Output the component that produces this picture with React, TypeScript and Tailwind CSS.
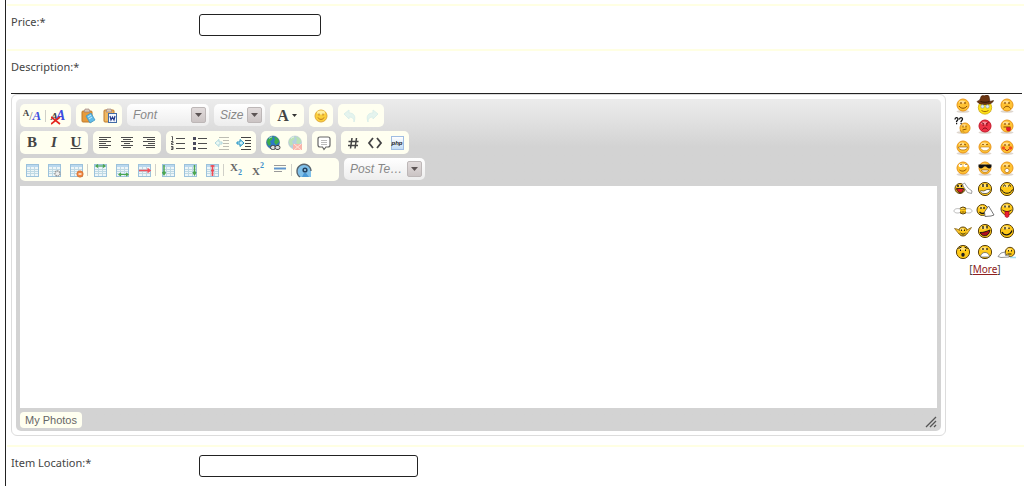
import type { ReactNode } from 'react';
import clsx from 'clsx';

interface IconProps {
  children: ReactNode;
  faded?: boolean;
}

function Icon({ children, faded }: IconProps) {
  return (
    <svg viewBox="0 0 16 16" className={clsx('h-4 w-4', faded && 'opacity-35')} fill="none" aria-hidden="true">
      {children}
    </svg>
  );
}

function Tool({ label, children }: { label: string; children: ReactNode }) {
  return (
    <button type="button" aria-label={label} title={label} className="flex h-full w-[22px] items-center justify-center">
      {children}
    </button>
  );
}

function Group({ children, className }: { children: ReactNode; className?: string }) {
  return (
    <div className={clsx('flex h-[23px] items-center rounded-[5px] bg-[#fffff0] px-px', className)}>{children}</div>
  );
}

function Divider({ className = 'mr-px' }: { className?: string }) {
  return <span className={clsx('h-3 w-px bg-[#d0d0c8]', className)} />;
}

function Combo({ label, className }: { label: string; className: string }) {
  return (
    <div className={clsx('relative h-[22px] rounded-[5px] bg-linear-to-b from-white to-[#ededed]', className)}>
      <select
        aria-label={label}
        className="h-full w-full appearance-none bg-transparent pr-4 pb-px pl-[6px] text-[12px] leading-4 text-[#888] italic outline-none"
      >
        <option>{label}</option>
      </select>
      <span className="pointer-events-none absolute top-[3px] right-[3px] flex h-4 w-[15px] items-center justify-center rounded-[2px] border border-[#bdb7b7] bg-linear-to-b from-[#e2dcdc] to-[#cbc4c4]">
        <svg viewBox="0 0 7 4" className="h-1 w-[7px]" aria-hidden="true">
          <path d="M0 0h7L3.500 4z" fill="#5c5454" />
        </svg>
      </span>
    </div>
  );
}

function Lines({ rows }: { rows: [number, number][] }) {
  return (
    <Icon>
      {rows.map(([x, w], i) => (
        <rect key={i} x={x} y={2 + i * 2} width={w} height="1" fill="#4d4d4d" />
      ))}
    </Icon>
  );
}

function Sheet({ children }: { children?: ReactNode }) {
  return (
    <Icon>
      <rect x="2.500" y="2.500" width="12" height="12" fill="#eef6f8" stroke="#9cc2dc" />
      <rect x="3" y="3" width="11" height="2" fill="#b9d8ee" />
      <path d="M3 7.500h11M3 9.500h11M3 11.500h11M6.500 5v9M10.500 5v9" stroke="#bfd9e4" />
      {children}
    </Icon>
  );
}

function ListIcon({ numbered }: { numbered?: boolean }) {
  return (
    <Icon>
      <path d="M6 3.500h9M6 8.500h9M6 13.500h9" stroke="#4d4d4d" />
      {numbered ? (
        <path d="M1.500 1.500h1v4M1 6.500h2v1.500H1.500V9.500h2M1 11.500h2v1.500H1.500H3V14.500H1" stroke="#555" />
      ) : (
        <path d="M1 2h3v3H1zM1 7h3v3H1zM1 12h3v3H1z" fill="#4b4b5c" />
      )}
    </Icon>
  );
}

function IndentIcon({ out }: { out?: boolean }) {
  return (
    <Icon faded={out}>
      <path d="M5 2.500h10M9 5.500h6M9 8.500h6M9 11.500h6M5 14.500h10" stroke="#444" />
      {out ? (
        <path d="M1 8l4-3.500V7h3v2H5v2.500z" fill="#c8f0fa" stroke="#1e8fc0" />
      ) : (
        <path d="M8 8L4 4.500V7H1v2h3v2.500z" fill="#c8f0fa" stroke="#1e8fc0" />
      )}
    </Icon>
  );
}

function Globe({ faded, children }: { faded?: boolean; children: ReactNode }) {
  return (
    <Icon faded={faded}>
      <circle cx="8" cy="7.500" r="6.500" fill="#2d79c4" stroke="#2c5f88" strokeWidth=".6" />
      <path d="M2 6c1-3 4-5 6-4l-1 3-2 1 1 3-2 2C3 10 2 8 2 6zM9 2c3 0 5 2 5 5l-3 3-2-3 1-2z" fill="#3fae4a" />
      <path d="M4 3.500c1-1 2-1.500 3-1.500" stroke="#bfe9ff" />
      {children}
    </Icon>
  );
}

type Mood =
  | 'smile' | 'cowboy' | 'sad' | 'confused' | 'mad' | 'tongue' | 'grin' | 'laugh' | 'blush' | 'roll' | 'cool' | 'shocked'
  | 'salute' | 'chomp' | 'happy' | 'hug' | 'clap' | 'lick' | 'shrug' | 'open' | 'wink' | 'gasp' | 'teeth' | 'wave';

const moods: Mood[] = [
  'smile', 'cowboy', 'sad',
  'confused', 'mad', 'tongue',
  'grin', 'laugh', 'blush',
  'roll', 'cool', 'shocked',
  'salute', 'chomp', 'happy',
  'hug', 'clap', 'lick',
  'shrug', 'open', 'wink',
  'gasp', 'teeth', 'wave',
];

const ink = '#8a4f00';

const eyes = <path d="M8 7v2M12 7v2" stroke={ink} strokeWidth="1.200" />;

// Soft faces have an orange rim, the later ones a dark cartoon outline
const faces: Record<Mood, ReactNode> = {
  smile: <>{eyes}<path d="M6 11c2 3 6 3 8 0" stroke={ink} /></>,
  cowboy: (
    <>
      <circle cx="10" cy="12.500" r="6.700" fill="#ffe21a" stroke="#c9a200" strokeWidth=".7" />
      <path d="M2 6.500c2-1 3-1 4-5C8-.5 9 1.500 10 .5c1.500-1 3-1 4 1l1 5 3.500-1c-1 3.500-5.500 4-8.500 4s-6.500-.5-8-3z" fill="#6b3512" stroke="#3d1b06" strokeWidth=".6" />
      <path d="M5.500 6.500c3 1 6 1 9 0" stroke="#2d1203" />
      <circle cx="7.500" cy="11.500" r="1.700" fill="#dff1ff" stroke="#8296a0" strokeWidth=".6" />
      <circle cx="12.500" cy="11.500" r="1.700" fill="#dff1ff" stroke="#8296a0" strokeWidth=".6" />
      <path d="M6.500 15.500c2.500 1.500 4.500 1.500 7 0" stroke={ink} strokeWidth=".8" />
    </>
  ),
  sad: <>{eyes}<path d="M6.500 13.500c2-3 5-3 7 0" stroke={ink} /></>,
  confused: (
    <>
      <path d="M10 9.500v2M13 9.500v2M9.500 14l4-1" stroke={ink} />
      <path d="M2 3.500c0-2.500 3-2.500 3-.5C5 4.500 3.500 4.500 3.500 6M6.500 3.500c0-2.500 3-2.500 3-.5C9.500 4.500 8 4.500 8 6" stroke="#111" strokeWidth="1.300" />
      <path d="M3 7.500h1.200M7.500 7.500h1.200" stroke="#111" strokeWidth="1.300" />
      <path d="M7 14l2 2 2-.5v1.500H8.500z" fill="#ffd84f" stroke="#c98a14" strokeWidth=".6" />
    </>
  ),
  mad: <><path d="M6.500 6.500l2.500 1.500M13.500 6.500L11 8M7.500 9h1.500M11 9h1.500M7.500 13.500c1.500-2 3.500-2 5 0" stroke="#7d0714" /></>,
  tongue: <>{eyes}<path d="M6.500 11h7" stroke={ink} /><path d="M9.500 11.500h4v2c0 2-4 2-4 0z" fill="#e7192c" stroke="#b3101f" strokeWidth=".5" /></>,
  grin: <><path d="M7 8l2-1M11 7l2 1" stroke={ink} /><path d="M5.500 10h9c0 4-9 4-9 0z" fill="#fff" stroke={ink} strokeWidth=".6" /></>,
  laugh: <><path d="M7 8l1-1 1 1M11 8l1-1 1 1" stroke={ink} strokeWidth=".8" /><path d="M5.500 10h9c0 5-9 5-9 0z" fill="#fff" stroke="#c07a10" strokeWidth=".6" /></>,
  blush: <>{eyes}<circle cx="6.500" cy="11" r="1.700" fill="#f2521b" /><circle cx="13.500" cy="11" r="1.700" fill="#f2521b" /><path d="M8 12c1 2 3 2 4 0" stroke="#9d0011" /></>,
  roll: <><circle cx="7.500" cy="7.500" r="1.800" fill="#fff" /><circle cx="12.500" cy="7.500" r="1.800" fill="#fff" /><path d="M7.500 6.500h1M12.500 6.500h1" stroke="#4a2b00" strokeWidth="1.200" /><path d="M6.500 12c3 2 5 1 7-1" stroke={ink} /></>,
  cool: <><path d="M3.500 6.500h13v2c-1 3-4 2-5.500 0h-2c-1 2-4.500 3-5.500 0z" fill="#111" /><path d="M6.500 12h7c0 3-7 3-7 0z" fill="#fff" stroke={ink} strokeWidth=".6" /></>,
  shocked: <>{eyes}<circle cx="10" cy="12.500" r="2.200" fill="#fff" stroke="#b97612" strokeWidth=".8" /></>,
  salute: (
    <>
      <path d="M5 6v2M8.500 6v2" stroke="#111" strokeWidth="1.500" />
      <path d="M3.500 9.500h7c0 5.500-6 5.500-7 0z" fill="#d91a2a" stroke="#111" strokeWidth=".8" />
      <path d="M9.500 5.500l2-1.500 3.500 5 4 3-.5 2.500-4-1-3.500-5z" fill="#fff" stroke="#777" strokeWidth=".7" />
    </>
  ),
  chomp: <><path d="M8 5v3M12 5v3" stroke="#111" strokeWidth="1.300" /><path d="M5 12.500c1-2 3 .5 5-1s4-1 5-1-1 4-4 4-4.500 0-6-2z" fill="#fff" stroke="#333" strokeWidth=".7" /></>,
  happy: <><path d="M6.500 7.500c0-2 2-2 2 0M11.500 7.500c0-2 2-2 2 0M4.500 10.500c2 5 9 5 11 0" stroke="#111" /></>,
  hug: (
    <>
      <path d="M7 12.500c-2 1-6 .5-6-1.500S4 8 7 9M13 12.500c2 1 6 .5 6-1.500s-3-3-6-2" fill="#fff" stroke="#aaa" strokeWidth=".8" />
      <path d="M9 9v1M11 9v1M8.500 12h3" stroke="#5c3d00" strokeWidth=".8" />
    </>
  ),
  clap: <><path d="M6 7v2M9 7v2M4.500 12c2 2 4 2 6 0" stroke="#111" strokeWidth="1.200" /><path d="M9.500 12l4-6 2.500 4 3 5-3 1-6 .5z" fill="#fff" stroke="#555" strokeWidth=".8" /></>,
  lick: <><path d="M8 5.500v2M12 5.500v2" stroke="#111" strokeWidth="1.300" /><path d="M5.500 10c3 2 6 2 9 0" stroke="#111" /><path d="M8 11.500h4v4c0 2.500-4 2.500-4 0z" fill="#ee2030" stroke="#8f0010" strokeWidth=".6" /></>,
  shrug: (
    <>
      <path d="M6 13L1.500 7.500 4 8l3 1.500M14 13l4.500-6.500L15.500 8 13 9.500" fill="#ffc62b" stroke="#7a5a10" strokeWidth=".7" />
      <path d="M8.500 8.500v1.500M11.500 8.500v1.500M7.500 12c1.500 1.500 3.500 1.500 5 0" stroke="#111" strokeWidth=".9" />
    </>
  ),
  open: <><path d="M8 5v3M12 4.500v3" stroke="#111" strokeWidth="1.300" /><path d="M5 11.500c4 0 6-1 10-2.500-1 7-8 7.500-10 2.500z" fill="#b10c1c" stroke="#111" strokeWidth=".9" /></>,
  wink: <><path d="M8 6v2.500M12 6.500V8M5 11c2 4 8 4 10-1.500" stroke="#111" strokeWidth="1.200" /></>,
  gasp: <><path d="M5.500 6.500l3-1.500M14.500 6.500l-3-1.500M7.500 7.500v1.500M12.500 7.500v1.500" stroke="#111" /><ellipse cx="10" cy="12.800" rx="1.700" ry="2" fill="#222" /></>,
  teeth: <><path d="M8 6v2M12 6v2" stroke="#111" strokeWidth="1.200" /><path d="M5.500 15c0-6 9-6 9 0z" fill="#fff" stroke="#555" strokeWidth=".7" /></>,
  wave: (
    <>
      <path d="M11.500 8v1.500M14.500 8v1.500M10.500 12h4" stroke="#111" strokeWidth=".9" />
      <path d="M8 10l-4 1-3 3.500 3 1 8-.5v-2l-3.500.5z" fill="#fff" stroke="#777" strokeWidth=".8" />
      <path d="M13 15.500h6" stroke="#a6def0" strokeWidth="1.500" />
    </>
  ),
};

// cx, cy, r of the heads that are not centred
const heads: Partial<Record<Mood, [number, number, number]>> = {
  confused: [12, 12, 5],
  salute: [7, 9.5, 5],
  hug: [10, 10.5, 3.5],
  clap: [7.5, 10, 5.5],
  lick: [10, 9, 6],
  shrug: [10, 10.5, 4.5],
  wave: [13, 10, 4.7],
};

function Face({ mood }: { mood: Mood }) {
  const cartoon = moods.indexOf(mood) >= 12;
  const [cx, cy, r] = heads[mood] ?? [10, 10, cartoon ? 6.6 : 6];
  return (
    <svg viewBox="0 0 20 20" className="h-5 w-5" fill="none" aria-hidden="true">
      {!cartoon && <ellipse cx="10" cy="16.500" rx="6.500" ry="1.300" fill="#ded6ce" />}
      {mood !== 'cowboy' && (
        <>
          <circle
            cx={cx}
            cy={cy}
            r={r}
            fill={mood === 'mad' ? '#ee3446' : cartoon ? '#ffc918' : '#ffc233'}
            stroke={mood === 'mad' ? '#c4162a' : cartoon ? '#5a4210' : '#e8961c'}
            strokeWidth="1"
          />
          <ellipse cx={cx - 1} cy={cy - r / 2} rx={r / 2} ry={r / 4} fill="#fff" opacity=".45" />
        </>
      )}
      {faces[mood]}
    </svg>
  );
}

function Toolbar() {
  return (
    <div className="flex flex-col gap-1">
      <div className="flex flex-wrap gap-[5px]">
        <Group>
          <Tool label="Remove Format">
            <span className="flex items-end font-['Liberation_Serif',serif] leading-none text-[#444]">
              <b className="pb-1 text-[9px]">A</b>
              <span className="text-[12px] text-[#777]">/</span>
              <b className="text-[13px] text-[#3b4ce0] italic">A</b>
            </span>
          </Tool>
          <Divider className="mr-px ml-0.5" />
          <Tool label="Switch Editor">
            <span className="relative flex items-end font-['Liberation_Serif',serif] leading-none text-[#444]">
              <b className="pb-px text-[11px] italic">A</b>
              <b className="-ml-0.5 text-[14px] text-[#3b4ce0] italic">A</b>
              <svg viewBox="0 0 10 9" className="absolute -bottom-0.5 left-0 h-[9px] w-[10px]" aria-hidden="true">
                <path d="M0 1l9 7M9 1L0 8" stroke="#e52620" strokeWidth="1.600" />
              </svg>
            </span>
          </Tool>
          <span className="w-px" />
        </Group>
        <Group>
          <Tool label="Paste as plain text">
            <Icon>
              <rect x="2" y="3" width="10" height="11" rx="1" fill="#e69b3c" stroke="#c07a2a" />
              <path d="M5 1h4l1 3H4z" fill="#d6c8b5" stroke="#977" strokeWidth=".6" />
              <path d="M6 8l5-3 4 7-5 3z" fill="#62bde8" stroke="#3b93c4" strokeWidth=".7" />
              <path d="M8 9l3-2M9 11l3-2" stroke="#c6ecff" />
            </Icon>
          </Tool>
          <Tool label="Paste from Word">
            <Icon>
              <rect x="2" y="2" width="10" height="12" rx="1" fill="#efb961" stroke="#c07a2a" />
              <path d="M5 1h4l1 3H4z" fill="#d6c8b5" stroke="#977" strokeWidth=".6" />
              <rect x="6.500" y="5.500" width="8" height="9" fill="#f5f9ff" stroke="#426ca6" />
              <path d="M8 8l1 4 1.500-3 1.500 3 1-4" stroke="#273e8e" strokeWidth="1.200" />
            </Icon>
          </Tool>
        </Group>
        <Combo label="Font" className="w-[82px]" />
        <Combo label="Size" className="w-[51px]" />
        <Group>
          <button type="button" aria-label="Text Color" className="flex w-8 items-center justify-center gap-[3px] font-['Liberation_Serif',serif] text-[16px] leading-none font-bold text-[#444]">
            A
            <svg viewBox="0 0 5 3" className="h-[3px] w-[5px]" aria-hidden="true">
              <path d="M0 0h5L2.500 3z" fill="#333" />
            </svg>
          </button>
        </Group>
        <Group>
          <Tool label="Smilies">
            <Icon>
              <circle cx="8" cy="8" r="6" fill="#fbcf3b" stroke="#e0aa3c" />
              <ellipse cx="8" cy="4.500" rx="4" ry="2" fill="#fff0a0" />
              <path d="M6 5.500v2M10 5.500v2M5 9.500c1 2.500 5 2.500 6 0" stroke="#b8741e" />
            </Icon>
          </Tool>
        </Group>
        <Group>
          <Tool label="Undo">
            <Icon faded>
              <path d="M2 6l5-4v3c5 0 7 3 5 9 0-4-2-5-5-5v2z" fill="#b6e2ed" stroke="#9ad2e0" />
            </Icon>
          </Tool>
          <Tool label="Redo">
            <Icon faded>
              <path d="M14 6L9 2v3c-5 0-7 3-5 9 0-4 2-5 5-5v2z" fill="#b6e2ed" stroke="#9ad2e0" />
            </Icon>
          </Tool>
        </Group>
      </div>

      <div className="flex flex-wrap gap-[5px]">
        <Group className="font-['Liberation_Serif',serif] text-[15px] leading-none font-bold text-[#444]">
          <Tool label="Bold">B</Tool>
          <Tool label="Italic"><span className="italic">I</span></Tool>
          <Tool label="Underline"><span className="underline">U</span></Tool>
        </Group>
        <Group>
          <Tool label="Align Left"><Lines rows={[[2, 12], [2, 8], [2, 12], [2, 7], [2, 12], [2, 9]]} /></Tool>
          <Tool label="Center"><Lines rows={[[2, 12], [4, 8], [2, 12], [5, 6], [2, 12], [4, 8]]} /></Tool>
          <Tool label="Align Right"><Lines rows={[[2, 12], [6, 8], [2, 12], [7, 7], [2, 12], [5, 9]]} /></Tool>
        </Group>
        <Group>
          <Tool label="Numbered List"><ListIcon numbered /></Tool>
          <Tool label="Bulleted List"><ListIcon /></Tool>
          <Tool label="Decrease Indent"><IndentIcon out /></Tool>
          <Tool label="Increase Indent"><IndentIcon /></Tool>
        </Group>
        <Group>
          <Tool label="Link">
            <Globe>
              <rect x="5.500" y="10.500" width="5" height="4" rx="2" fill="#ddd" stroke="#444" />
              <rect x="10" y="10.500" width="5" height="4" rx="2" fill="#ddd" stroke="#444" />
            </Globe>
          </Tool>
          <Tool label="Unlink">
            <Globe faded>
              <rect x="6" y="9" width="9" height="6" fill="#f03030" />
              <path d="M7 9l7 6M14 9l-7 6" stroke="#ffb0b0" />
            </Globe>
          </Tool>
        </Group>
        <Group>
          <Tool label="Quote">
            <Icon>
              <path d="M4 2h8q2 0 2 2v6q0 2-2 2h-2l-2 2.500L6.500 12H4q-2 0-2-2V4q0-2 2-2z" fill="#fff" stroke="#666" strokeWidth="1.200" />
              <path d="M5 5.500h6M5 7.500h6M5 9.500h6" stroke="#bbb" />
            </Icon>
          </Tool>
        </Group>
        <Group>
          <Tool label="Code">
            <Icon><path d="M7 3L5.500 13.500M11.500 3L10 13.500M3.500 6.500h10M3 10.500h10" stroke="#444" strokeWidth="1.500" /></Icon>
          </Tool>
          <Tool label="HTML">
            <Icon><path d="M6 3L2 8l4 5M10 3l4 5-4 5" stroke="#444" strokeWidth="1.800" /></Icon>
          </Tool>
          <Tool label="PHP">
            <span className="flex h-[14px] w-[13px] items-center justify-center border border-[#9fbde2] bg-linear-to-b from-white to-[#c3dcf4] font-['Liberation_Sans',sans-serif] text-[6px] leading-none font-bold text-[#222] italic">
              php
            </span>
          </Tool>
        </Group>
      </div>

      <div className="flex flex-wrap gap-[5px]">
        <Group className="pr-6">
          <Tool label="Table"><Sheet /></Tool>
          <Tool label="Table Properties">
            <Sheet><circle cx="11.500" cy="11.500" r="2.500" fill="#eee" stroke="#999" strokeWidth="1.500" strokeDasharray="1.500 .7" /></Sheet>
          </Tool>
          <Tool label="Delete Table">
            <Sheet><circle cx="12" cy="12" r="3.200" fill="#ee8540" stroke="#d06a28" strokeWidth=".6" /><path d="M10.500 12h3" stroke="#fff" strokeWidth="1.300" /></Sheet>
          </Tool>
          <Divider />
          <Tool label="Insert Row Before">
            <Sheet><path d="M4 4h9M6 2.500L4 4l2 1.500M11 2.500L13 4l-2 1.500" stroke="#4ba650" strokeWidth="1.200" /></Sheet>
          </Tool>
          <Tool label="Insert Row After">
            <Sheet><path d="M5 12.500h9M7 11l-2 1.500L7 14M12 11l2 1.500-2 1.500" stroke="#4ba650" strokeWidth="1.200" /></Sheet>
          </Tool>
          <Tool label="Delete Row">
            <Sheet><path d="M3 8.500h11M11.500 6.500L14 8.500l-2.500 2" stroke="#f0505a" strokeWidth="1.500" /></Sheet>
          </Tool>
          <Divider />
          <Tool label="Insert Column Before">
            <Sheet><path d="M4 3v9M2.500 10L4 12.500 5.500 10" stroke="#4ba650" strokeWidth="1.500" /></Sheet>
          </Tool>
          <Tool label="Insert Column After">
            <Sheet><path d="M12.500 3v9M11 10l1.500 2.500L14 10" stroke="#4ba650" strokeWidth="1.500" /></Sheet>
          </Tool>
          <Tool label="Delete Column">
            <Sheet><path d="M8.500 3v11M6.500 4h4M7 8.500h3" stroke="#ee4a54" strokeWidth="1.700" /></Sheet>
          </Tool>
          <Divider />
          <Tool label="Subscript">
            <span className="flex items-end font-['Liberation_Serif',serif] leading-none font-bold text-[#666]">
              <span className="pb-1 text-[11px]">X</span>
              <span className="text-[8px] text-[#3e8fca]">2</span>
            </span>
          </Tool>
          <Tool label="Superscript">
            <span className="flex items-start font-['Liberation_Serif',serif] leading-none font-bold text-[#666]">
              <span className="pt-1 text-[11px]">X</span>
              <span className="text-[8px] text-[#3e8fca]">2</span>
            </span>
          </Tool>
          <Tool label="Horizontal Line">
            <Icon>
              <path d="M2 3.500h12M2 9.500h8" stroke="#999" />
              <path d="M2 6.500h12" stroke="#5f96d0" strokeWidth="2" />
            </Icon>
          </Tool>
          <Divider />
          <Tool label="Media">
            <Icon>
              <path d="M4 15A7 7 0 1 1 15 10v5z" fill="#7fc0ea" />
              <path d="M4 15A7 7 0 1 1 15 9" stroke="#59656e" strokeWidth="1.400" />
              <circle cx="9" cy="8" r="2.600" fill="#22405f" />
              <circle cx="9" cy="8" r="1" fill="#a9d8f5" />
              <path d="M6 15l2-4h2l3 4z" fill="#4a98d4" />
            </Icon>
          </Tool>
        </Group>
        <Combo label="Post Te…" className="w-[81px]" />
      </div>
    </div>
  );
}

function Editor() {
  return (
    <div className="min-w-0 flex-1 rounded-[6px] border border-[#dcdcdc] bg-white p-1">
      <div className="rounded-[5px] bg-[#d3d3d3] bg-linear-to-b from-[#ececec] to-[#d3d3d3] to-[48px] px-1 pt-[5px] font-['Liberation_Sans',sans-serif]">
        <Toolbar />
        <textarea id="description" className="mt-[5px] block h-[222px] w-full resize-none bg-white p-2 text-[13px] outline-none" />
        <div className="flex h-[23px] items-center justify-between">
          <button type="button" className="h-4 rounded-[4px] bg-[#fffff0] px-[5px] text-[11px] leading-4 text-[#666]">
            My Photos
          </button>
          <svg viewBox="0 0 12 12" className="mt-1 h-3 w-3" aria-hidden="true">
            <path d="M1 11L11 1M5 11l6-6M9 11l2-2" stroke="#555" strokeWidth="1.300" />
          </svg>
        </div>
      </div>
    </div>
  );
}

function Smilies() {
  return (
    <aside className="mr-1 ml-1.5 flex shrink-0 flex-col items-center">
      <div className="grid grid-cols-3">
        {moods.map((mood) => (
          <button key={mood} type="button" aria-label={mood} className="flex h-[21px] w-[22px] items-center justify-center">
            <Face mood={mood} />
          </button>
        ))}
      </div>
      <span className="text-[10px] leading-[14px] text-[#444]">
        [<a href="#more" className="text-[#8f2020] underline">More</a>]
      </span>
    </aside>
  );
}

function Field({ id, label, inputClass }: { id: string; label: string; inputClass: string }) {
  return (
    <div className="flex items-start border-t-2 border-[#ffffe3] pt-2 pb-[13px] pl-1">
      <label htmlFor={id} className="w-[188px] shrink-0 leading-4">{label}</label>
      <input id={id} type="text" className={clsx('h-[22px] rounded-[3px] border border-[#222] bg-white px-1 outline-none', inputClass)} />
    </div>
  );
}

export default function App() {
  return (
    <main className="min-h-screen bg-white pl-[5px] font-['Noto_Sans',sans-serif] text-[11px] text-[#444]">
      <form className="min-h-screen border-l border-[#222] pt-1 pl-px">
        <Field id="price" label="Price:*" inputClass="w-[122px]" />
        <div className="border-t-2 border-[#ffffe3] pt-2 pr-0.5 pb-[9px] pl-1">
          <label htmlFor="description" className="block h-[34px] leading-4">Description:*</label>
          <div className="flex border-t border-[#222]">
            <Editor />
            <Smilies />
          </div>
        </div>
        <Field id="location" label="Item Location:*" inputClass="w-[219px]" />
      </form>
    </main>
  );
}
